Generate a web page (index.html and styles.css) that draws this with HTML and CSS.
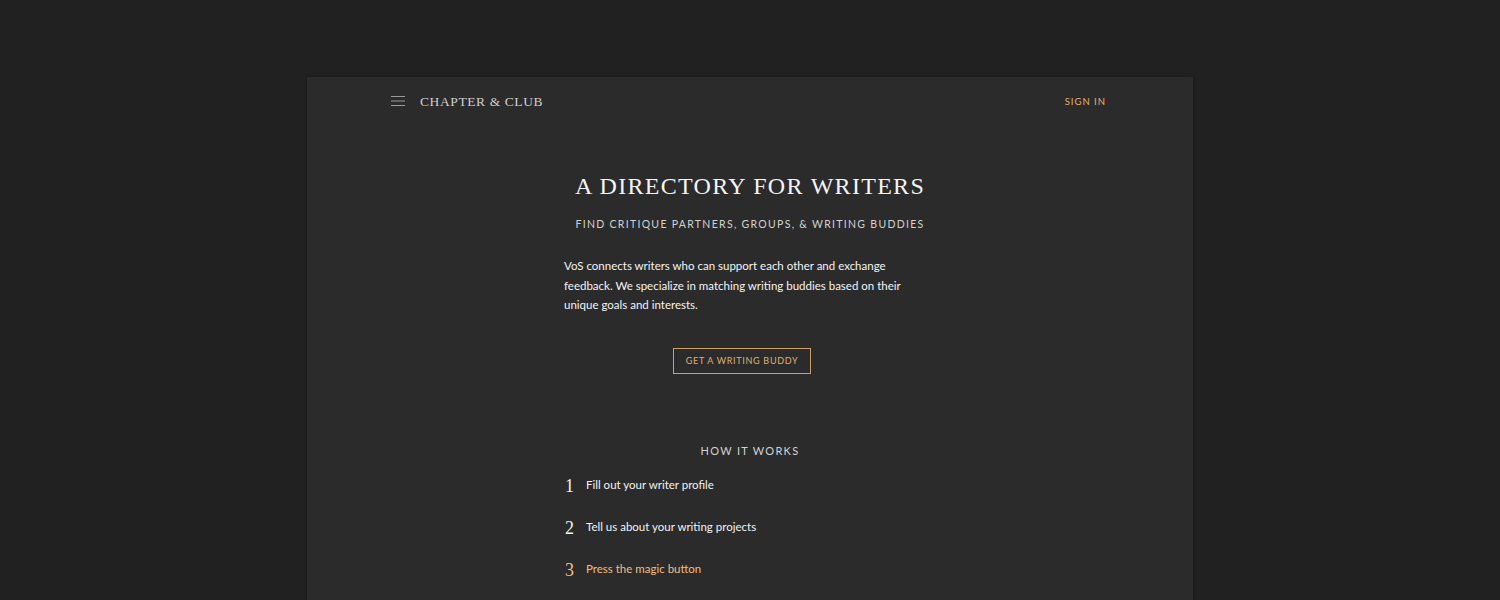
FILE: index.html
```html
<!DOCTYPE html>
<html lang="en">
<head>
<meta charset="utf-8">
<title>Chapter &amp; Club</title>
<link rel="stylesheet" href="styles.css">
</head>
<body>
<div class="card">
  <header class="topbar">
    <div class="brand">
      <svg class="burger" width="14" height="10" viewBox="0 0 14 10"><path d="M0 0.5H14M0 5H14M0 9.5H14" stroke="#9a9a9a" stroke-width="1"/></svg>
      <span class="logo">CHAPTER &amp; CLUB</span>
    </div>
    <a class="signin">SIGN IN</a>
  </header>
  <section class="hero">
    <h1 class="title">A DIRECTORY FOR WRITERS</h1>
    <h2 class="subtitle">FIND CRITIQUE PARTNERS, GROUPS, &amp; WRITING BUDDIES</h2>
    <div class="column">
      <p class="intro">VoS connects writers who can support each other and exchange feedback. We specialize in matching writing buddies based on their unique goals and interests.</p>
      <div class="cta-row"><a class="cta">GET A WRITING BUDDY</a></div>
    </div>
    <h3 class="how">HOW IT WORKS</h3>
    <ol class="steps column">
      <li class="step"><span class="num">1</span><span class="label">Fill out your writer profile</span></li>
      <li class="step"><span class="num">2</span><span class="label">Tell us about your writing projects</span></li>
      <li class="step gold"><span class="num">3</span><span class="label">Press the magic button</span></li>
    </ol>
  </section>
</div>
</body>
</html>
```
FILE: styles.css
```css
html, body {
  margin: 0;
  padding: 0;
  background: #212121;
  height: 100%;
  overflow: hidden;
}
body {
  padding-top: 77px;
  font-family: Lato, "Open Sans", sans-serif;
  color: #f2f2f2;
}
.card {
  width: 886px;
  margin: 0 auto;
  background: #2b2b2b;
  min-height: 700px;
  box-shadow: 0 0 3px rgba(0,0,0,0.35);
}
.topbar {
  display: flex;
  justify-content: space-between;
  align-items: center;
  height: 48px;
  padding: 0 87px 0 84px;
}
.brand {
  display: flex;
  align-items: center;
  gap: 15px;
}
.burger { display: block; }
.logo {
  font-family: "Liberation Serif", serif;
  font-size: 13.5px;
  letter-spacing: 0.6px;
  color: #cfcfcf;
  position: relative;
  top: 1px;
}
.signin {
  font-size: 9.5px;
  font-weight: 400;
  letter-spacing: 1px;
  color: #e3b372;
}
.hero {
  padding-top: 46px;
}
.title {
  margin: 0;
  text-align: center;
  font-family: "Liberation Serif", serif;
  font-weight: 400;
  font-size: 24px;
  letter-spacing: 1.3px;
  color: #f4f4f4;
  line-height: 30px;
}
.subtitle {
  margin: 15px 0 0;
  text-align: center;
  font-weight: 400;
  font-size: 10.5px;
  letter-spacing: 1.3px;
  color: #d2d2d2;
  line-height: 16px;
}
.column {
  width: 356px;
  margin-left: 257px;
}
.intro {
  margin: 24px 0 0;
  font-size: 11.5px;
  line-height: 19.5px;
  color: #f4f4f4;
}
.cta-row {
  display: flex;
  justify-content: center;
  margin-top: 33px;
}
.cta {
  display: inline-block;
  border: 1px solid #c9a26a;
  padding: 0 12px;
  height: 24px;
  line-height: 24px;
  font-size: 9px;
  letter-spacing: 0.7px;
  color: #e0b070;
}
.how {
  margin: 69px 0 0;
  text-align: center;
  font-weight: 400;
  font-size: 11px;
  letter-spacing: 1.3px;
  color: #d2d2d2;
  line-height: 16px;
}
.steps {
  list-style: none;
  padding: 0;
  margin-top: 14px;
  margin-bottom: 0;
}
.step {
  display: flex;
  align-items: baseline;
  gap: 12px;
  height: 42px;
}
.num {
  font-family: "Liberation Serif", serif;
  font-size: 18px;
  width: 9px;
  margin-left: 1px;
  position: relative;
  top: 3px;
}
.label {
  font-size: 11.5px;
}
.gold { color: #eebf80; }
```
